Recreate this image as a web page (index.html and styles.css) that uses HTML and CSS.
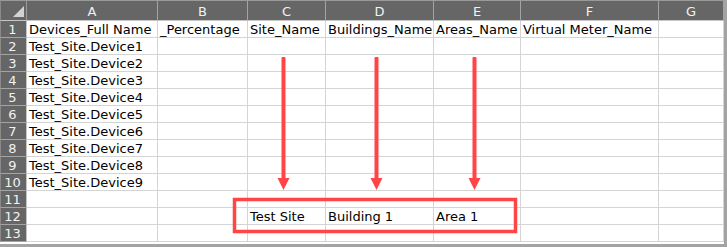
FILE: index.html
```html
<!DOCTYPE html>
<html>
<head>
<meta charset="utf-8">
<link rel="stylesheet" href="styles.css">
</head>
<body>
<div class="frame">
  <div class="sheet">
    <div class="corner"><svg class="corner-tri" width="27" height="21" viewBox="0 0 27 21"><polygon points="24,6 24,17 13,17" fill="#d2d2d2"/></svg></div>
    <div class="ch">A</div><div class="ch">B</div><div class="ch">C</div><div class="ch">D</div><div class="ch">E</div><div class="ch">F</div><div class="ch">G</div>

    <div class="rh">1</div><div class="c">Devices_Full Name</div><div class="c">_Percentage</div><div class="c">Site_Name</div><div class="c">Buildings_Name</div><div class="c">Areas_Name</div><div class="c">Virtual Meter_Name</div><div class="c"></div>
    <div class="rh">2</div><div class="c">Test_Site.Device1</div><div class="c"></div><div class="c"></div><div class="c"></div><div class="c"></div><div class="c"></div><div class="c"></div>
    <div class="rh">3</div><div class="c">Test_Site.Device2</div><div class="c"></div><div class="c"></div><div class="c"></div><div class="c"></div><div class="c"></div><div class="c"></div>
    <div class="rh">4</div><div class="c">Test_Site.Device3</div><div class="c"></div><div class="c"></div><div class="c"></div><div class="c"></div><div class="c"></div><div class="c"></div>
    <div class="rh">5</div><div class="c">Test_Site.Device4</div><div class="c"></div><div class="c"></div><div class="c"></div><div class="c"></div><div class="c"></div><div class="c"></div>
    <div class="rh">6</div><div class="c">Test_Site.Device5</div><div class="c"></div><div class="c"></div><div class="c"></div><div class="c"></div><div class="c"></div><div class="c"></div>
    <div class="rh">7</div><div class="c">Test_Site.Device6</div><div class="c"></div><div class="c"></div><div class="c"></div><div class="c"></div><div class="c"></div><div class="c"></div>
    <div class="rh">8</div><div class="c">Test_Site.Device7</div><div class="c"></div><div class="c"></div><div class="c"></div><div class="c"></div><div class="c"></div><div class="c"></div>
    <div class="rh">9</div><div class="c">Test_Site.Device8</div><div class="c"></div><div class="c"></div><div class="c"></div><div class="c"></div><div class="c"></div><div class="c"></div>
    <div class="rh">10</div><div class="c">Test_Site.Device9</div><div class="c"></div><div class="c"></div><div class="c"></div><div class="c"></div><div class="c"></div><div class="c"></div>
    <div class="rh">11</div><div class="c"></div><div class="c"></div><div class="c"></div><div class="c"></div><div class="c"></div><div class="c"></div><div class="c"></div>
    <div class="rh">12</div><div class="c"></div><div class="c"></div><div class="c">Test Site</div><div class="c">Building 1</div><div class="c">Area 1</div><div class="c"></div><div class="c"></div>
    <div class="rh">13</div><div class="c"></div><div class="c"></div><div class="c"></div><div class="c"></div><div class="c"></div><div class="c"></div><div class="c"></div>
  </div>
  <svg class="overlay" width="727" height="247" viewBox="0 0 727 247">
    <g fill="#ff4545" stroke="none">
      <rect x="281.5" y="57" width="4" height="123" rx="1"/>
      <polygon points="277.5,178 289.5,178 283.5,190"/>
      <rect x="374.5" y="57" width="4" height="123" rx="1"/>
      <polygon points="370.5,178 382.5,178 376.5,190"/>
      <rect x="472.5" y="57" width="4" height="123" rx="1"/>
      <polygon points="468.5,178 480.5,178 474.5,190"/>
    </g>
    <rect x="234.5" y="199.5" width="281" height="32" fill="none" stroke="#ff4545" stroke-width="3.5"/>
  </svg>
</div>
</body>
</html>
```
FILE: styles.css
```css
html, body {
  margin: 0;
  padding: 0;
  background: #ffffff;
}
.frame {
  position: relative;
  width: 727px;
  height: 247px;
  background: #a3a3a3;
  box-sizing: border-box;
  padding: 0 3px 0 0;
  overflow: hidden;
}
.sheet {
  display: grid;
  grid-template-columns: 27px 131px 90px 78px 108px 87px 138px 65px;
  grid-template-rows: 21px repeat(13, 17px);
  background: #ffffff;
  width: 724px;
  border-bottom: 2px solid #ffffff;
  font-family: "DejaVu Sans", Verdana, sans-serif;
  font-size: 13px;
}
.corner {
  background: #666666;
  border-top: 1px solid #9a9a9a;
  border-left: 1px solid #8a8a8a;
  border-right: 1px solid #9c9c9c;
  border-bottom: 1px solid #c6c6c6;
  box-sizing: border-box;
  position: relative;
}
.corner-tri {
  position: absolute;
  left: -1px;
  top: -1px;
}
.ch {
  background: #666666;
  color: #f2f2f2;
  border-top: 1px solid #9a9a9a;
  border-right: 1px solid #a4a4a4;
  border-bottom: 1px solid #c6c6c6;
  box-sizing: border-box;
  display: flex;
  align-items: center;
  justify-content: center;
  padding-top: 1px;
}
.rh {
  background: #666666;
  color: #f2f2f2;
  border-left: 1px solid #8a8a8a;
  border-right: 1px solid #c6c6c6;
  border-bottom: 1px solid #a4a4a4;
  box-sizing: border-box;
  text-align: center;
  line-height: 15px;
  padding-top: 1px;
  padding-right: 2px;
}
.c {
  color: #000000;
  border-right: 1px solid #d4d4d4;
  border-bottom: 1px solid #d4d4d4;
  box-sizing: border-box;
  line-height: 15px;
  padding-top: 1px;
  padding-left: 2px;
  white-space: nowrap;
  overflow: visible;
}
.overlay {
  position: absolute;
  left: 0;
  top: 0;
  pointer-events: none;
}
```
